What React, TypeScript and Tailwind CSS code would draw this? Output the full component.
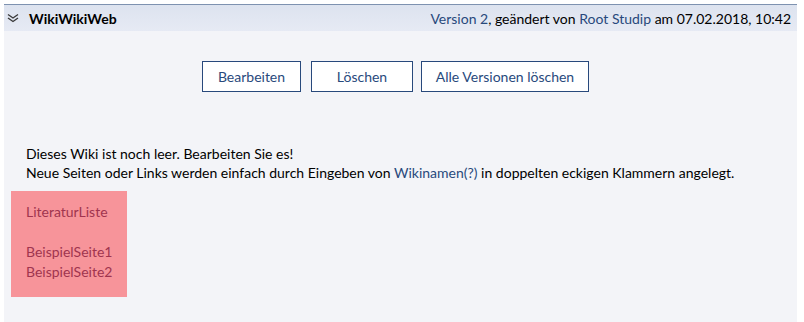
export default function App() {
  return (
    <div className="min-h-[322px] bg-white pl-1 pr-[7px] pt-1 font-['Lato',sans-serif] text-[14px] text-black">
      <section className="min-h-[318px] bg-[#f3f4f8]">
        {/* Header */}
        <header className="flex h-[27px] items-center justify-between border-t border-[#7e92b0] bg-gradient-to-b from-[#dde3ef] to-[#e6eaf4] pl-[3px] pr-[6px]">
          <div className="flex items-center gap-[10px]">
            <svg width="12" height="10" viewBox="0 0 12 10" fill="none" stroke="#3a3a3a" strokeWidth="1.4">
              <path d="M1 1.5 L6 5 L11 1.5" />
              <path d="M1 5 L6 8.5 L11 5" />
            </svg>
            <span className="font-bold">WikiWikiWeb</span>
          </div>
          <div>
            <a className="text-[#28497c]">Version 2</a>, geändert von{' '}
            <a className="text-[#28497c]">Root Studip</a> am 07.02.2018, 10:42
          </div>
        </header>

        {/* Actions */}
        <div className="flex justify-center gap-[10px] pt-[30px] pr-[10px]">
          <button className="h-[31px] w-[99px] border border-[#28497c] bg-white text-[#28497c]">Bearbeiten</button>
          <button className="h-[31px] w-[102px] border border-[#28497c] bg-white text-[#28497c]">Löschen</button>
          <button className="ml-[-2px] h-[31px] w-[168px] border border-[#28497c] bg-white text-[#28497c]">
            Alle Versionen löschen
          </button>
        </div>

        {/* Content */}
        <div className="px-[22px] pt-[52px] leading-[19px]">
          <p>Dieses Wiki ist noch leer. Bearbeiten Sie es!</p>
          <p>
            Neue Seiten oder Links werden einfach durch Eingeben von{' '}
            <a className="text-[#28497c]">Wikinamen(?)</a> in doppelten eckigen Klammern angelegt.
          </p>
        </div>

        <div className="ml-[7px] mt-[9px] w-[116px] bg-[#f7949a] pl-[15px] pt-[11px] pb-[15px] leading-[20px] text-[#a0344f]">
          <div>LiteraturListe</div>
          <div className="h-5" />
          <div>BeispielSeite1</div>
          <div>BeispielSeite2</div>
        </div>
      </section>
    </div>
  );
}
